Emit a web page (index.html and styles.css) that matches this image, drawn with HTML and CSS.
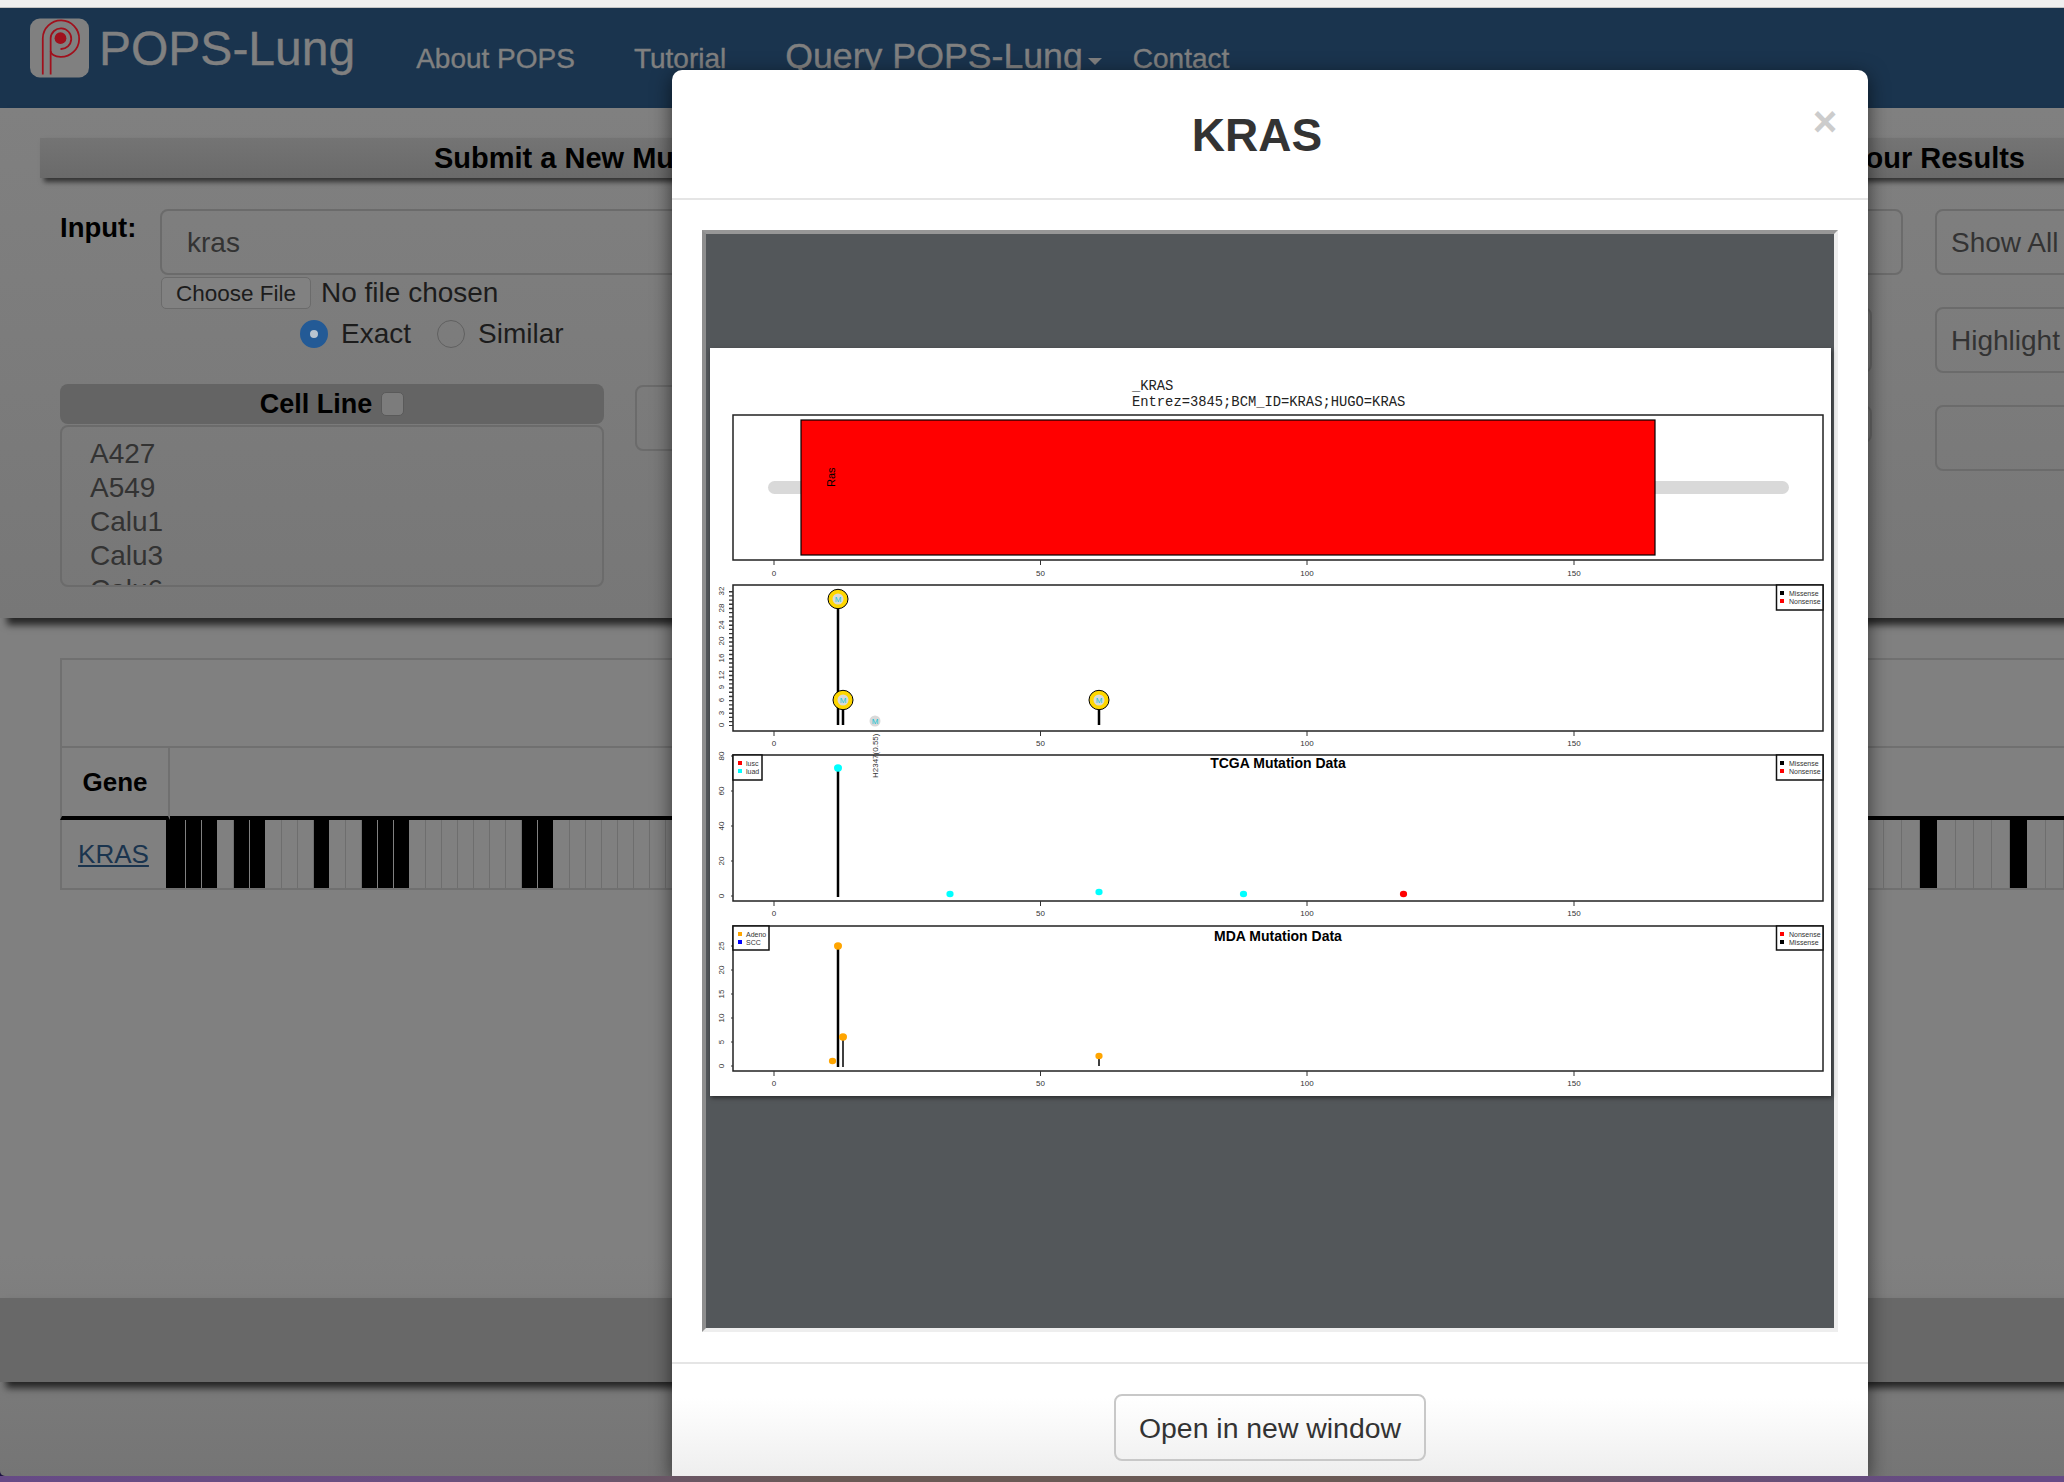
FILE: index.html
```html
<!DOCTYPE html>
<html lang="en">
<head>
    <meta charset="UTF-8">
    <title>POPS-Lung</title>
    <link rel="stylesheet" href="styles.css">
</head>
<body>
    <div class="top-strip"></div>

    <div class="window">
        <nav class="navbar">
            <svg class="logo" viewBox="0 0 60 60">
                <rect width="60" height="60" rx="10" fill="#808080"/>
                <g fill="none" stroke="#a0101c" stroke-width="1.8">
                    <path d="M13 57V20A18.5 18.5 0 1 1 31 39C25 39 21 36 21 33"/>
                    <path d="M21 57V20A10.5 10.5 0 1 1 31 31"/>
                </g>
                <circle cx="31" cy="20" r="6" fill="#a0101c"/>
            </svg>
            <span class="brand">POPS-Lung</span>
            <ul class="nav-links">
                <li>About POPS</li>
                <li>Tutorial</li>
                <li class="nav-query">Query POPS-Lung<span class="caret"></span></li>
                <li>Contact</li>
            </ul>
        </nav>

        <section class="panel">
            <div class="panel-title">
                <span>Submit a New Mutation Query</span>
                <span>Your Results</span>
            </div>

            <div class="form-row">
                <div class="form-main">
                    <div class="input-row">
                        <label class="input-label">Input:</label>
                        <div class="text-box">kras</div>
                    </div>
                    <div class="form-lower">
                        <div class="left-col">
                            <div class="file-row">
                                <span class="file-button">Choose File</span>
                                <span>No file chosen</span>
                            </div>
                            <div class="radio-row">
                                <span class="radio checked"></span><span class="radio-text">Exact</span>
                                <span class="radio"></span><span class="radio-text">Similar</span>
                            </div>
                            <div class="list-head">Cell Line <span class="check"></span></div>
                            <div class="list-box">
                                <div>A427</div>
                                <div>A549</div>
                                <div>Calu1</div>
                                <div>Calu3</div>
                                <div>Calu6</div>
                            </div>
                        </div>
                        <div class="mid-col">
                            <div class="mid-a"><div class="blank-box"></div></div>
                            <div class="mid-b">
                                <div class="blank-box"></div>
                                <div class="blank-box short"></div>
                            </div>
                        </div>
                    </div>
                </div>
                <div class="form-side">
                    <div class="side-button">Show All</div>
                    <div class="side-button">Highlight</div>
                    <div class="side-button"></div>
                </div>
            </div>
        </section>

        <table class="heat-table">
            <colgroup>
                <col class="col-gene">
                <col>
            </colgroup>
            <thead>
                <tr class="head-blank"><th colspan="2"></th></tr>
                <tr class="head-names"><th class="gene-cell">Gene</th><th></th></tr>
            </thead>
            <tbody>
                <tr class="gene-row">
                    <td class="gene-cell"><a class="gene-link">KRAS</a></td>
                    <td class="strip-cell">
                        <div class="strip">
                            <div class="cells">
                                <div class="cell on first"></div><div class="cell on"></div><div class="cell on"></div><div class="cell"></div>
                                <div class="cell on"></div><div class="cell on"></div><div class="cell"></div><div class="cell"></div>
                                <div class="cell"></div><div class="cell on"></div><div class="cell"></div><div class="cell"></div>
                                <div class="cell on"></div><div class="cell on"></div><div class="cell on"></div><div class="cell"></div>
                                <div class="cell"></div><div class="cell"></div><div class="cell"></div><div class="cell"></div>
                                <div class="cell"></div><div class="cell"></div><div class="cell on"></div><div class="cell on"></div>
                                <div class="cell"></div><div class="cell"></div><div class="cell"></div><div class="cell"></div>
                                <div class="cell"></div><div class="cell"></div><div class="cell"></div><div class="cell"></div>
                            </div>
                            <div class="cells wide">
                                <div class="cell"></div><div class="cell"></div><div class="cell"></div><div class="cell on"></div>
                                <div class="cell"></div><div class="cell"></div><div class="cell"></div><div class="cell"></div>
                                <div class="cell on"></div><div class="cell"></div><div class="cell"></div>
                            </div>
                        </div>
                    </td>
                </tr>
            </tbody>
        </table>

        <footer class="site-footer"></footer>

        <div class="modal">
            <div class="modal-header">
                <h1 class="modal-title">KRAS</h1>
                <span class="close">&times;</span>
            </div>
            <div class="modal-body">
                <div class="plot-well">
                    <!-- viewBox uses the same numbers as the page, easier to read off the plot -->
                    <svg class="plot" viewBox="710 348 1121 748">
                        <text class="mono" x="1132" y="390">_KRAS</text>
                        <text class="mono" x="1132" y="406">Entrez=3845;BCM_ID=KRAS;HUGO=KRAS</text>

                        <!-- domain track -->
                        <rect class="frame" x="733" y="415" width="1090" height="145"/>
                        <rect x="768" y="481" width="1021" height="13" rx="6.5" fill="#d9d9d9"/>
                        <rect x="801" y="420" width="854" height="135" fill="#f00" stroke="#000" stroke-width="1.2"/>
                        <text class="domain" transform="translate(835 487) rotate(-90)">Ras</text>
                        <path class="tick" d="M774 560v5M1040.5 560v5M1307 560v5M1574 560v5"/>
                        <text class="axis" x="774" y="576">0</text>
                        <text class="axis" x="1040.5" y="576">50</text>
                        <text class="axis" x="1307" y="576">100</text>
                        <text class="axis" x="1574" y="576">150</text>

                        <!-- cell line mutations -->
                        <rect class="frame" x="733" y="585" width="1090" height="146"/>
                        <line x1="731" y1="591" x2="731" y2="726" stroke="#333" stroke-width="4" stroke-dasharray="1.4 2.79"/>
                        <text class="axis" transform="translate(724 591) rotate(-90)">32</text>
                        <text class="axis" transform="translate(724 608) rotate(-90)">28</text>
                        <text class="axis" transform="translate(724 625) rotate(-90)">24</text>
                        <text class="axis" transform="translate(724 641) rotate(-90)">20</text>
                        <text class="axis" transform="translate(724 658) rotate(-90)">16</text>
                        <text class="axis" transform="translate(724 675) rotate(-90)">12</text>
                        <text class="axis" transform="translate(724 687) rotate(-90)">9</text>
                        <text class="axis" transform="translate(724 700) rotate(-90)">6</text>
                        <text class="axis" transform="translate(724 713) rotate(-90)">3</text>
                        <text class="axis" transform="translate(724 725) rotate(-90)">0</text>
                        <path class="stick" d="M838 607V725M843 708V725M1099 708V725"/>
                        <g class="pin">
                            <ellipse cx="838" cy="599" rx="10" ry="9.7"/>
                            <ellipse cx="843" cy="700" rx="10" ry="9.7"/>
                            <ellipse cx="1099" cy="700" rx="10" ry="9.7"/>
                        </g>
                        <g fill="#d9d9d9">
                            <circle cx="838" cy="599" r="5.5"/>
                            <circle cx="843" cy="700" r="5.5"/>
                            <circle cx="1099" cy="700" r="5.5"/>
                            <circle cx="875" cy="721" r="5.5"/>
                        </g>
                        <text class="pin-letter" x="838" y="602">M</text>
                        <text class="pin-letter" x="843" y="703">M</text>
                        <text class="pin-letter" x="1099" y="703">M</text>
                        <text class="pin-letter" x="875" y="724">M</text>
                        <path class="tick" d="M774 731v5M1040.5 731v5M1307 731v5M1574 731v5"/>
                        <text class="axis" x="774" y="746">0</text>
                        <text class="axis" x="1040.5" y="746">50</text>
                        <text class="axis" x="1307" y="746">100</text>
                        <text class="axis" x="1574" y="746">150</text>
                        <rect class="legend-box" x="1776.5" y="585" width="46.5" height="25"/>
                        <rect x="1780" y="591" width="4" height="4" fill="#000"/>
                        <rect x="1780" y="599" width="4" height="4" fill="#f00"/>
                        <text class="legend" x="1789" y="596">Missense</text>
                        <text class="legend" x="1789" y="604">Nonsense</text>

                        <!-- TCGA -->
                        <rect class="frame" x="733" y="755" width="1090" height="146"/>
                        <text class="sample" transform="translate(878 778) rotate(-90)">H2347(0.55)</text>
                        <path class="tick" d="M731 756h2M731 791h2M731 826h2M731 861h2M731 896h2"/>
                        <text class="axis" transform="translate(724 756) rotate(-90)">80</text>
                        <text class="axis" transform="translate(724 791) rotate(-90)">60</text>
                        <text class="axis" transform="translate(724 826) rotate(-90)">40</text>
                        <text class="axis" transform="translate(724 861) rotate(-90)">20</text>
                        <text class="axis" transform="translate(724 896) rotate(-90)">0</text>
                        <text class="plot-title" x="1278" y="768">TCGA Mutation Data</text>
                        <path class="stick" d="M838 770V897"/>
                        <g fill="#0ff">
                            <ellipse cx="838" cy="768" rx="4" ry="3.7"/>
                            <ellipse cx="950" cy="894" rx="3.6" ry="3.3"/>
                            <ellipse cx="1099" cy="892" rx="3.6" ry="3.3"/>
                            <ellipse cx="1243.5" cy="894" rx="3.6" ry="3.3"/>
                        </g>
                        <ellipse cx="1403.5" cy="894" rx="3.6" ry="3.3" fill="#f00"/>
                        <rect class="legend-box" x="733" y="755" width="29" height="25"/>
                        <rect x="738" y="761" width="4" height="4" fill="#f00"/>
                        <rect x="738" y="769" width="4" height="4" fill="#0ff"/>
                        <text class="legend" x="746" y="766">lusc</text>
                        <text class="legend" x="746" y="774">luad</text>
                        <rect class="legend-box" x="1776.5" y="755" width="46.5" height="25"/>
                        <rect x="1780" y="761" width="4" height="4" fill="#000"/>
                        <rect x="1780" y="769" width="4" height="4" fill="#f00"/>
                        <text class="legend" x="1789" y="766">Missense</text>
                        <text class="legend" x="1789" y="774">Nonsense</text>
                        <path class="tick" d="M774 901v5M1040.5 901v5M1307 901v5M1574 901v5"/>
                        <text class="axis" x="774" y="916">0</text>
                        <text class="axis" x="1040.5" y="916">50</text>
                        <text class="axis" x="1307" y="916">100</text>
                        <text class="axis" x="1574" y="916">150</text>

                        <!-- MDA -->
                        <rect class="frame" x="733" y="926" width="1090" height="145"/>
                        <path class="tick" d="M731 946h2M731 970h2M731 994h2M731 1018h2M731 1042h2M731 1066h2"/>
                        <text class="axis" transform="translate(724 946) rotate(-90)">25</text>
                        <text class="axis" transform="translate(724 970) rotate(-90)">20</text>
                        <text class="axis" transform="translate(724 994) rotate(-90)">15</text>
                        <text class="axis" transform="translate(724 1018) rotate(-90)">10</text>
                        <text class="axis" transform="translate(724 1042) rotate(-90)">5</text>
                        <text class="axis" transform="translate(724 1066) rotate(-90)">0</text>
                        <text class="plot-title" x="1278" y="941">MDA Mutation Data</text>
                        <path class="stick" d="M838 948V1067"/>
                        <path class="stick thin" d="M843 1039V1067M1099 1058V1066"/>
                        <g fill="#ffa500">
                            <ellipse cx="838" cy="946" rx="4" ry="3.7"/>
                            <ellipse cx="843" cy="1037" rx="4" ry="3.7"/>
                            <ellipse cx="832.5" cy="1061" rx="3.6" ry="3.3"/>
                            <ellipse cx="1099" cy="1056" rx="3.6" ry="3.3"/>
                        </g>
                        <rect class="legend-box" x="733" y="926" width="36" height="24"/>
                        <rect x="738" y="932" width="4" height="4" fill="#ffa500"/>
                        <rect x="738" y="940" width="4" height="4" fill="#00f"/>
                        <text class="legend" x="746" y="936.5">Adeno</text>
                        <text class="legend" x="746" y="944.5">SCC</text>
                        <rect class="legend-box" x="1776.5" y="926" width="46.5" height="24"/>
                        <rect x="1780" y="932" width="4" height="4" fill="#f00"/>
                        <rect x="1780" y="940" width="4" height="4" fill="#000"/>
                        <text class="legend" x="1789" y="936.5">Nonsense</text>
                        <text class="legend" x="1789" y="944.5">Missense</text>
                        <path class="tick" d="M774 1071v5M1040.5 1071v5M1307 1071v5M1574 1071v5"/>
                        <text class="axis" x="774" y="1086">0</text>
                        <text class="axis" x="1040.5" y="1086">50</text>
                        <text class="axis" x="1307" y="1086">100</text>
                        <text class="axis" x="1574" y="1086">150</text>
                    </svg>
                </div>
            </div>
            <div class="modal-footer">
                <button class="open-button">Open in new window</button>
            </div>
        </div>
    </div>

    <div class="bottom-strip"></div>
</body>
</html>
```

FILE: styles.css
```css
* {
    box-sizing: border-box;
}

body {
    margin: 0;
    height: 1482px;
    overflow: hidden;
    display: flex;
    flex-direction: column;
    font-family: "Liberation Sans", Arial, sans-serif;
    font-size: 28px;
    color: #1c1c1c;
    background: #1d1440;
}

.top-strip {
    height: 8px;
    background: #f0f0f0;
    border-bottom: 1px solid #c4c4c4;
}

.bottom-strip {
    height: 6px;
    background: linear-gradient(90deg, #664a86, #6a4f80 20%, #6a5a55 40%, #6a5a55 65%, #664a86 95%);
}

.window {
    flex: 1;
    position: relative;
    overflow: hidden;
    display: flex;
    flex-direction: column;
    border-bottom-left-radius: 5px;
    background: linear-gradient(#808080 85%, #757575);
}

/* navbar */
.navbar {
    height: 100px;
    flex: none;
    display: flex;
    align-items: flex-start;
    background: #1a344e;
    color: #808080;
    -webkit-text-stroke: 0.4px #808080;
}

.logo {
    width: 59px;
    height: 60px;
    margin: 10px 0 0 30px;
}

.brand {
    margin: 17px 61px 0 10px;
    font-size: 48px;
    line-height: 48px;
}

.nav-links {
    display: flex;
    align-items: baseline;
    list-style: none;
    margin: 30px 0 0;
    padding: 0;
}

.nav-links li {
    margin-right: 59px;
}

.nav-links .nav-query {
    margin-right: 31px;
    font-size: 35.7px;
    line-height: 36px;
}

.caret {
    display: inline-block;
    margin-left: 5px;
    vertical-align: 3px;
    border-top: 7px solid #808080;
    border-left: 7px solid transparent;
    border-right: 7px solid transparent;
}

/* submit panel */
.panel {
    flex: none;
    padding: 30px 0 31px;
    background: linear-gradient(#808080, #777);
    box-shadow: 7px 7px 7px rgba(0, 0, 0, 0.7);
}

.panel-title {
    height: 40px;
    margin-left: 40px;
    padding: 0 39px 0 394px;
    display: flex;
    justify-content: space-between;
    align-items: center;
    font-size: 29px;
    font-weight: bold;
    color: #000;
    background: linear-gradient(#747474, #6a6a6a);
    box-shadow: 4px 4px 5px rgba(0, 0, 0, 0.6);
}

.form-row {
    display: flex;
    gap: 32px;
    margin: 31px 0 0 60px;
}

.form-main {
    width: 1843px;
    flex: none;
}

.input-row {
    display: flex;
}

.input-label {
    width: 100px;
    font-size: 27.5px;
    font-weight: bold;
    line-height: 38px;
    color: #000;
}

.text-box {
    width: 1743px;
    height: 66px;
    padding-left: 25px;
    line-height: 64px;
    color: #333;
    border: 2px solid #6b6b6b;
    border-radius: 8px;
}

.form-lower {
    display: flex;
    gap: 31px;
    margin-top: 2px;
}

.left-col {
    width: 544px;
    flex: none;
}

.file-row {
    display: flex;
    align-items: center;
    gap: 10px;
    height: 32px;
    margin-left: 101px;
}

.file-button {
    width: 150px;
    height: 32px;
    font-size: 22.5px;
    line-height: 32px;
    text-align: center;
    border: 1px solid #6b6b6b;
    border-radius: 5px;
    background: #818181;
}

.radio-row {
    display: flex;
    align-items: center;
    height: 28px;
    margin: 11px 0 0 240px;
}

.radio {
    width: 28px;
    height: 28px;
    border: 1px solid #606060;
    border-radius: 50%;
}

.radio.checked {
    border: 10px solid #235a96;
    background: #b8c4d0;
}

.radio-text {
    margin: 0 26px 0 13px;
}

.list-head {
    height: 40px;
    margin-top: 36px;
    display: flex;
    align-items: center;
    justify-content: center;
    gap: 9px;
    font-size: 27px;
    font-weight: bold;
    color: #000;
    background: #646464;
    border-radius: 8px;
}

.check {
    width: 23px;
    height: 24px;
    border: 1px solid #5a5a5a;
    border-radius: 5px;
    background: #7c7c7c;
}

.list-box {
    height: 162px;
    margin-top: 1px;
    padding: 10px 0 0 28px;
    overflow: hidden;
    line-height: 34px;
    color: #333;
    border: 2px solid #6b6b6b;
    border-radius: 8px;
}

.mid-col {
    flex: 1;
    display: flex;
    gap: 30px;
    margin-right: 31px;
}

.mid-a {
    width: 500px;
    padding-top: 108px;
}

.mid-b {
    flex: 1;
    display: flex;
    flex-direction: column;
    gap: 32px;
    padding-top: 30px;
}

.blank-box {
    height: 66px;
    border: 2px solid #6b6b6b;
    border-radius: 8px;
}

.blank-box.short {
    height: 38px;
}

.form-side {
    width: 300px;
    flex: none;
    display: flex;
    flex-direction: column;
    gap: 32px;
}

.side-button {
    height: 66px;
    padding-left: 14px;
    line-height: 64px;
    color: #333;
    border: 2px solid #6b6b6b;
    border-radius: 8px;
}

/* results table */
.heat-table {
    flex: none;
    width: 2012px;
    margin: 40px 0 0 60px;
    table-layout: fixed;
    border-collapse: separate;
    border-spacing: 0;
    border-top: 2px solid #707070;
}

.col-gene {
    width: 110px;
}

.heat-table th,
.heat-table td {
    padding: 0;
}

.head-blank th {
    height: 88px;
    border-left: 2px solid #707070;
    border-bottom: 2px solid #707070;
}

.head-names th {
    height: 72px;
    font-size: 26px;
    color: #000;
    border-bottom: 4px solid #000;
}

.gene-cell {
    text-align: center;
    border-left: 2px solid #707070;
    border-right: 2px solid #707070;
}

.gene-row td {
    height: 70px;
    border-bottom: 2px solid #707070;
}

.gene-row .gene-cell {
    padding-right: 3px;
}

.gene-link {
    font-size: 26px;
    color: #1a344e;
    text-decoration: underline;
}

.strip {
    width: 1898px;
    height: 68px;
    margin-left: -4px;
    position: relative;
    display: flex;
    justify-content: space-between;
}

.cells {
    display: flex;
}

.cell {
    width: 16px;
    border-right: 1.5px solid #6e6e6e;
}

.cell.on {
    background: #000;
    border-right: 1.5px solid #808080;
}

.cell.first {
    width: 20px;
}

.cells.wide .cell {
    width: 18px;
}

.site-footer {
    flex: none;
    height: 84px;
    margin-top: auto;
    margin-bottom: 94px;
    background: #686868;
    box-shadow: 6px 6px 7px rgba(0, 0, 0, 0.7);
}

/* modal */
.modal {
    position: absolute;
    left: 672px;
    top: 62px;
    width: 1196px;
    height: 1406px;
    display: flex;
    flex-direction: column;
    color: #333;
    background: #fff;
    border-radius: 10px 10px 0 0;
    box-shadow: 0 5px 20px rgba(0, 0, 0, 0.6);
}

.modal-header {
    height: 130px;
    flex: none;
    padding: 2px 30px 0;
    display: flex;
    align-items: center;
    border-bottom: 2px solid #e5e5e5;
}

.modal-title {
    flex: 1;
    margin: 0;
    font-size: 46px;
    text-align: center;
}

.close {
    width: 26px;
    align-self: flex-start;
    margin-top: 27px;
    font-size: 42px;
    font-weight: bold;
    line-height: 46px;
    text-align: center;
    color: #ccc;
}

.modal-body {
    flex: 1;
    padding: 30px;
    display: flex;
}

.plot-well {
    flex: 1;
    padding: 114px 0 0 4px;
    background: #53575a;
    border: 4px solid;
    border-color: #979797 #eee #eee #8e8e8e;
}

.plot {
    display: block;
    width: 1121px;
    height: 748px;
    background: #fff;
    box-shadow: 1px 2px 4px rgba(0, 0, 0, 0.5);
}

.modal-footer {
    height: 114px;
    flex: none;
    padding-top: 30px;
    text-align: center;
    border-top: 2px solid #e5e5e5;
    background: linear-gradient(#fff 30%, #eee);
}

.open-button {
    width: 312px;
    height: 67px;
    padding: 2px 0 0;
    font-family: inherit;
    font-size: 28.4px;
    color: #333;
    background: transparent;
    border: 2px solid #c8c8c8;
    border-radius: 8px;
}

/* plot parts */
.frame {
    fill: #fff;
    stroke: #222;
    stroke-width: 1.5;
}

.tick {
    fill: none;
    stroke: #333;
    stroke-width: 1;
}

.stick {
    fill: none;
    stroke: #000;
    stroke-width: 2.5;
}

.stick.thin {
    stroke-width: 1.5;
}

.pin {
    fill: #ffd700;
    stroke: #000;
    stroke-width: 1;
}

.legend-box {
    fill: #fff;
    stroke: #111;
    stroke-width: 1.5;
}

.plot text {
    font-family: "Liberation Sans", Arial, sans-serif;
    fill: #333;
}

.plot .mono {
    font-family: "Liberation Mono", "Courier New", monospace;
    font-size: 13.8px;
    fill: #222;
}

.plot .axis {
    font-size: 8px;
    text-anchor: middle;
}

.plot .domain {
    font-size: 11px;
    fill: #000;
}

.plot .pin-letter {
    font-size: 8px;
    text-anchor: middle;
    fill: #12c4d4;
}

.plot .sample {
    font-size: 8px;
}

.plot .legend {
    font-size: 7px;
}

.plot .plot-title {
    font-size: 14px;
    font-weight: bold;
    text-anchor: middle;
    fill: #000;
}
```
